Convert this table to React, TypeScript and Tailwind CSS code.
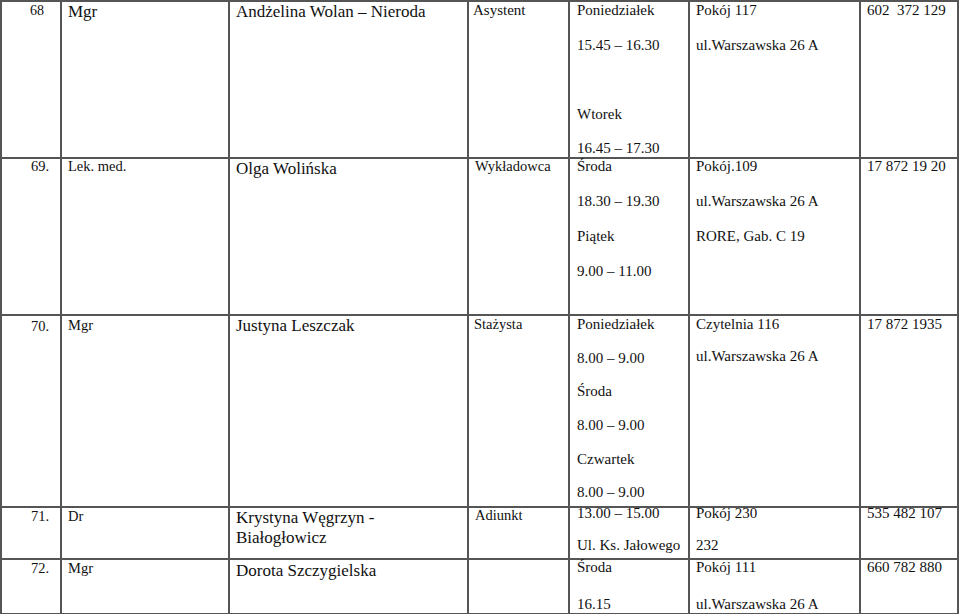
import React from "react"
import clsx from "clsx"

const cols = "grid grid-cols-[60px_168px_239px_101px_120px_171px_98px]"

function Cell({ className, children }: { className?: string; children?: React.ReactNode }) {
  return <div className={clsx("border-r-2 border-b-2 border-[#555] overflow-visible", className)}>{children}</div>
}

// stacked lines, like Word paragraphs with spacing after
function Lines({ items, gap, className }: { items: string[]; gap: string; className?: string }) {
  return (
    <div className={clsx("flex flex-col", gap, className)}>
      {items.map((t, i) => (
        <div key={i} className="h-[17px] leading-[17px] whitespace-pre">
          {t}
        </div>
      ))}
    </div>
  )
}

export default function App() {
  return (
    <div className="w-[959px] h-[614px] overflow-hidden bg-white text-[#111] [font-family:'Liberation_Serif','Times_New_Roman',serif]">
      <div className="border-t-2 border-l-2 border-[#555]">
        {/* 68 */}
        <div className={clsx(cols, "h-[156px]")}>
          <Cell className="text-right pr-[16px] text-[14px] leading-[17px]">68</Cell>
          <Cell className="pl-[6px] text-[17px] leading-[20px]">Mgr</Cell>
          <Cell className="pl-[6px] text-[17px] leading-[20px]">Andżelina Wolan – Nieroda</Cell>
          <Cell className="pl-[4px] text-[15px] leading-[17px]">Asystent</Cell>
          <Cell className="pl-[7px] text-[15px]">
            <Lines gap="gap-[17.5px]" items={["Poniedziałek", "15.45 – 16.30", "", "Wtorek", "16.45 – 17.30"]} />
          </Cell>
          <Cell className="pl-[6px] text-[15px]">
            <Lines gap="gap-[18px]" items={["Pokój 117", "ul.Warszawska 26 A"]} />
          </Cell>
          <Cell className="pl-[6px] text-[15px] leading-[17px] whitespace-pre">602  372 129</Cell>
        </div>

        {/* 69 */}
        <div className={clsx(cols, "h-[158px]")}>
          <Cell className="text-right pr-[11px] text-[14.5px] leading-[17px]">69.</Cell>
          <Cell className="pl-[6px] text-[14.5px] leading-[17px]">Lek. med.</Cell>
          <Cell className="pl-[6px] pt-[1px] text-[17px] leading-[20px]">Olga Wolińska</Cell>
          <Cell className="pl-[6px] text-[14.5px] leading-[17px]">Wykładowca</Cell>
          <Cell className="pl-[7px] text-[15px]">
            <Lines gap="gap-[18px]" items={["Środa", "18.30 – 19.30", "Piątek", "9.00 – 11.00"]} />
          </Cell>
          <Cell className="pl-[6px] text-[15px]">
            <Lines gap="gap-[18px]" items={["Pokój.109", "ul.Warszawska 26 A", "RORE, Gab. C 19"]} />
          </Cell>
          <Cell className="pl-[6px] text-[15px] leading-[17px]">17 872 19 20</Cell>
        </div>

        {/* 70 */}
        <div className={clsx(cols, "h-[192px]")}>
          <Cell className="text-right pr-[11px] pt-[2px] text-[14.5px] leading-[17px]">70.</Cell>
          <Cell className="pl-[6px] pt-[1px] text-[14.5px] leading-[17px]">Mgr</Cell>
          <Cell className="pl-[6px] text-[17px] leading-[20px]">Justyna Leszczak</Cell>
          <Cell className="pl-[5px] text-[14.5px] leading-[17px]">Stażysta</Cell>
          <Cell className="pl-[7px] text-[15px]">
            <Lines
              gap="gap-[16.7px]"
              items={["Poniedziałek", "8.00 – 9.00", "Środa", "8.00 – 9.00", "Czwartek", "8.00 – 9.00"]}
            />
          </Cell>
          <Cell className="pl-[6px] text-[15px]">
            <Lines gap="gap-[14.7px]" items={["Czytelnia 116", "ul.Warszawska 26 A"]} />
          </Cell>
          <Cell className="pl-[6px] text-[15px] leading-[17px]">17 872 1935</Cell>
        </div>

        {/* 71 */}
        <div className={clsx(cols, "h-[52px]")}>
          <Cell className="text-right pr-[11px] text-[14.5px] leading-[17px]">71.</Cell>
          <Cell className="pl-[6px] text-[14.5px] leading-[17px]">Dr</Cell>
          <Cell className="pl-[6px] text-[17px] leading-[20px]">
            Krystyna Węgrzyn -<br />
            Białogłowicz
          </Cell>
          <Cell className="pl-[6px] text-[14.5px] leading-[17px]">
            <div className="-mt-[1px]">Adiunkt</div>
          </Cell>
          <Cell className="pl-[7px] text-[15px]">
            <Lines gap="gap-[15px]" className="-mt-[3px]" items={["13.00 – 15.00", "Ul. Ks. Jałowego"]} />
          </Cell>
          <Cell className="pl-[6px] text-[15px]">
            <Lines gap="gap-[15px]" className="-mt-[3px]" items={["Pokój 230", "232"]} />
          </Cell>
          <Cell className="pl-[6px] text-[15px] leading-[17px]">
            <div className="-mt-[3px]">535 482 107</div>
          </Cell>
        </div>

        {/* 72 */}
        <div className={clsx(cols, "h-[54px]")}>
          <Cell className="text-right pr-[11px] text-[14.5px] leading-[17px]">72.</Cell>
          <Cell className="pl-[6px] text-[14.5px] leading-[17px]">Mgr</Cell>
          <Cell className="pl-[6px] pt-[1px] text-[17px] leading-[20px]">Dorota Szczygielska</Cell>
          <Cell />
          <Cell className="pl-[7px] text-[15px]">
            <Lines gap="gap-[19.5px]" className="-mt-[1px]" items={["Środa", "16.15"]} />
          </Cell>
          <Cell className="pl-[6px] text-[15px]">
            <Lines gap="gap-[19.5px]" className="-mt-[1px]" items={["Pokój 111", "ul.Warszawska 26 A"]} />
          </Cell>
          <Cell className="pl-[6px] text-[15px] leading-[17px]">
            <div className="-mt-[1px]">660 782 880</div>
          </Cell>
        </div>
      </div>
    </div>
  )
}
